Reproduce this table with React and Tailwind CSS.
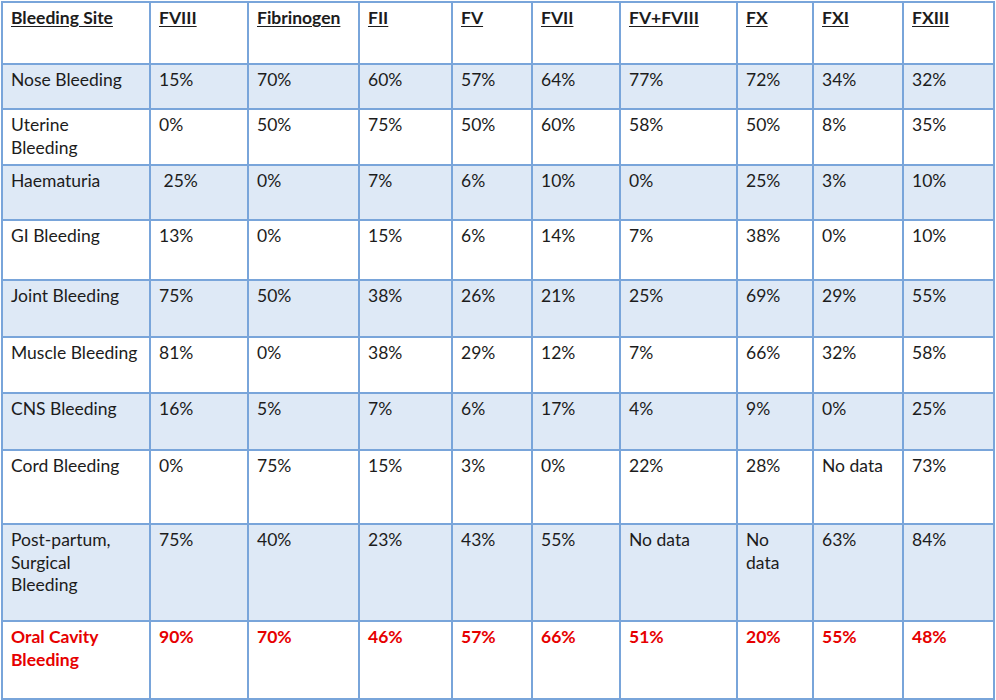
import React from 'react';

const widths = [148, 98, 111, 93, 80, 88, 117, 76, 90, 91];
const headers = ['Bleeding Site', 'FVIII', 'Fibrinogen', 'FII', 'FV', 'FVII', 'FV+FVIII', 'FX', 'FXI', 'FXIII'];

// [label lines, height, values]; arrays in values mean wrapped lines
const rows = [
  [['Nose Bleeding'], 'h-[45px]', ['15%', '70%', '60%', '57%', '64%', '77%', '72%', '34%', '32%']],
  [['Uterine', 'Bleeding'], 'h-[56px]', ['0%', '50%', '75%', '50%', '60%', '58%', '50%', '8%', '35%']],
  [['Haematuria'], 'h-[55px]', ['\u00a025%', '0%', '7%', '6%', '10%', '0%', '25%', '3%', '10%']],
  [['GI Bleeding'], 'h-[60px]', ['13%', '0%', '15%', '6%', '14%', '7%', '38%', '0%', '10%']],
  [['Joint Bleeding'], 'h-[57px]', ['75%', '50%', '38%', '26%', '21%', '25%', '69%', '29%', '55%']],
  [['Muscle Bleeding'], 'h-[56px]', ['81%', '0%', '38%', '29%', '12%', '7%', '66%', '32%', '58%']],
  [['CNS Bleeding'], 'h-[57px]', ['16%', '5%', '7%', '6%', '17%', '4%', '9%', '0%', '25%']],
  [['Cord Bleeding'], 'h-[74px]', ['0%', '75%', '15%', '3%', '0%', '22%', '28%', 'No data', '73%']],
  [['Post-partum,', 'Surgical', 'Bleeding'], 'h-[97px]', ['75%', '40%', '23%', '43%', '55%', 'No data', ['No', 'data'], '63%', '84%']],
];

const oral = ['90%', '70%', '46%', '57%', '66%', '51%', '20%', '55%', '48%'];

const cell = 'border-2 border-[#79a5da] align-top pl-[8px] pr-1 pt-[4px] text-left whitespace-nowrap';

const Lines = ({ parts }) =>
  parts.map((p, i) => (
    <React.Fragment key={i}>
      {i > 0 && <br />}
      {p}
    </React.Fragment>
  ));

export default function App() {
  return (
    <div className="bg-white w-[996px] h-[700px] font-['Lato',sans-serif] text-[17.5px] leading-[22.5px] text-[#1c1c1c]">
      <table className="border-collapse table-fixed w-[994px] ml-px mt-px">
        <colgroup>
          {widths.map((w, i) => (
            <col key={i} style={{ width: w }} />
          ))}
        </colgroup>
        <tbody>
          <tr className="h-[62px] bg-white">
            {headers.map((h) => (
              <th key={h} className={`${cell} font-bold underline underline-offset-2`}>
                {h}
              </th>
            ))}
          </tr>
          {rows.map(([label, h, vals], i) => (
            <tr key={label.join(' ')} className={`${h} ${i % 2 === 0 ? 'bg-[#dee9f6]' : 'bg-white'}`}>
              <td className={cell}>
                <Lines parts={label} />
              </td>
              {vals.map((v, j) => (
                <td key={j} className={cell}>
                  <Lines parts={Array.isArray(v) ? v : [v]} />
                </td>
              ))}
            </tr>
          ))}
          <tr className="h-[78px] bg-white text-[#e60000] font-bold">
            <td className={cell}>
              Oral Cavity
              <br />
              Bleeding
            </td>
            {oral.map((v, j) => (
              <td key={j} className={cell}>{v}</td>
            ))}
          </tr>
        </tbody>
      </table>
    </div>
  );
}
